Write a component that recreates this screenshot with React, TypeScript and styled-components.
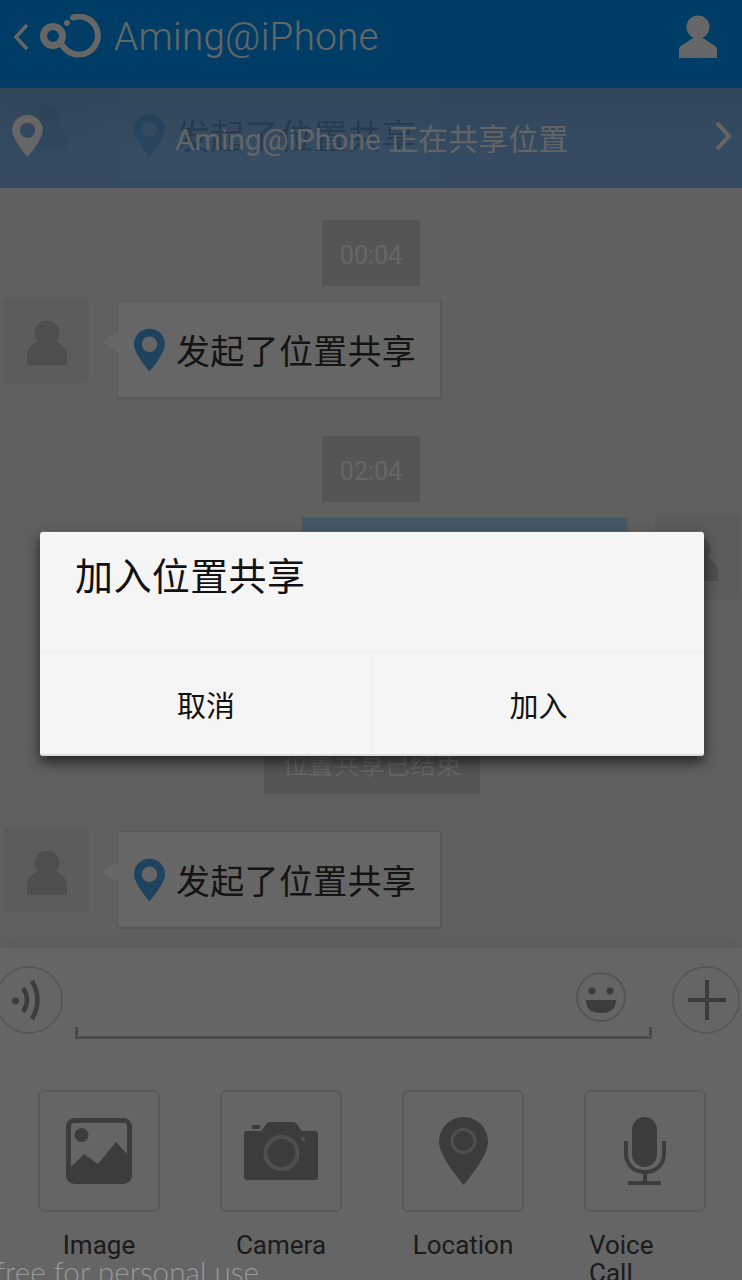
import React from 'react';
import styled, { createGlobalStyle } from 'styled-components';

const Global = createGlobalStyle`
  html, body { margin: 0; padding: 0; background: #606060; }
  * { box-sizing: border-box; }
`;

const FONT = `Roboto, "Noto Sans CJK SC", sans-serif`;

const Screen = styled.div`
  position: relative;
  width: 742px;
  height: 1280px;
  overflow: hidden;
  display: flex;
  flex-direction: column;
  background: #f0f0f0;
  font-family: ${FONT};
`;

const Header = styled.header`
  flex: none;
  height: 88px;
  background: #0099ff;
  color: #fff;
  display: flex;
  align-items: flex-start;
  padding: 14px 25px 0 12px;
`;
const BackIcon = styled.svg`
  width: 18px;
  height: 30px;
  margin-top: 8px;
`;
const Logo = styled.svg`
  width: 64px;
  height: 44px;
  margin-left: 10px;
`;
const HeaderTitle = styled.h1`
  margin: 0 0 0 10px;
  flex: 1;
  font-size: 38.6px;
  font-weight: 300;
  line-height: 46px;
  letter-spacing: 0.3px;
`;
const HeaderUser = styled.svg`
  width: 38px;
  height: 43px;
  margin-top: 1px;
`;

const Chat = styled.main`
  position: relative;
  flex: 1;
  min-height: 0;
  overflow: hidden;
  display: flex;
  flex-direction: column;
  justify-content: flex-end;
  padding-bottom: 19px;
`;
const Banner = styled.div`
  position: absolute;
  top: 0;
  left: 0;
  right: 0;
  height: 100px;
  display: flex;
  align-items: center;
  padding: 0 10px 0 12px;
  color: rgba(255, 255, 255, 0.95);
  background: linear-gradient(rgba(98, 160, 215, 0.82), rgba(109, 175, 244, 0.82) 60%);
`;
const BannerPin = styled.svg`
  width: 31px;
  height: 42px;
  margin-top: -4px;
`;
const BannerText = styled.span`
  margin-left: 132px;
  margin-top: 3px;
  flex: 1;
  font-size: 30px;
  line-height: 40px;
`;
const BannerChevron = styled.svg`
  width: 18px;
  height: 32px;
  margin-top: -4px;
`;

const Row = styled.div<{ $right?: boolean; $top?: number }>`
  flex: none;
  display: flex;
  align-items: flex-start;
  gap: ${p => (p.$right ? 27 : 28)}px;
  height: 101px;
  padding: 0 2px 0 4px;
  margin-top: ${p => p.$top ?? 0}px;
  justify-content: ${p => (p.$right ? 'flex-end' : 'flex-start')};
`;
const Avatar = styled.div`
  flex: none;
  width: 85px;
  height: 85px;
  border-radius: 4px;
  background: #e6e6e6;
  display: flex;
  align-items: center;
  justify-content: center;
  svg { width: 40px; height: 44px; margin-top: 4px; }
`;
const Bubble = styled.div<{ $blue?: boolean }>`
  position: relative;
  flex: none;
  width: ${p => (p.$blue ? 326 : 325)}px;
  height: 98px;
  margin-top: 3px;
  display: flex;
  align-items: center;
  padding-left: 16px;
  gap: 11px;
  font-size: 34px;
  letter-spacing: 0.3px;
  color: #333;
  background: ${p => (p.$blue ? '#a8dcff' : '#ffffff')};
  border: 1px solid #dcdcdc;
  border-bottom-width: 2px;
  border-right-width: 2px;
  &::before {
    content: '';
    display: ${p => (p.$blue ? 'none' : 'block')};
    position: absolute;
    left: -17px;
    top: 30px;
    border-style: solid;
    border-width: 10px 17px 10px 0;
    border-color: transparent #ffffff transparent transparent;
  }
`;
const BubblePin = styled.svg`
  width: 31px;
  height: 44px;
  flex: none;
`;
const Chip = styled.div<{ $top: number; $wide?: boolean }>`
  flex: none;
  align-self: center;
  height: 66px;
  margin-top: ${p => p.$top}px;
  margin-left: ${p => (p.$wide ? 2 : 0)}px;
  padding: 0 ${p => (p.$wide ? 19 : 18)}px;
  background: #d4d4d4;
  color: #fff;
  font-size: ${p => (p.$wide ? 25.5 : 25)}px;
  line-height: ${p => (p.$wide ? 74 : 71)}px;
  white-space: nowrap;
`;

const Composer = styled.footer`
  flex: none;
  height: 332px;
  background: #fdfdfd;
  box-shadow: 0 -6px 8px rgba(0, 0, 0, 0.04);
`;
const InputRow = styled.div`
  display: flex;
  align-items: flex-start;
  gap: 12px;
  padding: 18px 2px 0 0;
  margin-left: -5px;
  height: 91px;
`;
const RoundButton = styled.svg`
  flex: none;
  width: 68px;
  height: 68px;
`;
const InputField = styled.div`
  position: relative;
  flex: 1;
  margin-right: 8px;
  height: 73px;
  border-bottom: 3px solid #b8b8b8;
  display: flex;
  justify-content: flex-end;
  padding: 6px 26px 0 0;
  &::before, &::after {
    content: '';
    position: absolute;
    bottom: 0;
    width: 3px;
    height: 9px;
    background: #b8b8b8;
  }
  &::before { left: 0; }
  &::after { right: 0; }
`;
const Smile = styled.svg`
  width: 50px;
  height: 50px;
`;
const Tools = styled.div`
  display: grid;
  grid-template-columns: repeat(4, 122px);
  column-gap: 60px;
  padding: 51px 0 0 38px;
`;
const Tool = styled.div`
  display: flex;
  flex-direction: column;
  align-items: center;
`;
const ToolTile = styled.div`
  width: 122px;
  height: 122px;
  border: 2px solid #e0e0e0;
  border-radius: 6px;
  display: flex;
  align-items: center;
  justify-content: center;
`;
const ToolIcon = styled.svg`
  display: block;
`;
const ToolLabel = styled.span`
  margin-top: 19px;
  max-width: 112px;
  font-size: 26px;
  line-height: 28px;
  color: #444;
`;

const Dim = styled.div`
  position: absolute;
  inset: 0;
  background: rgba(0, 0, 0, 0.6);
  display: flex;
  align-items: center;
  padding: 8px 38px 0 40px;
`;
const Dialog = styled.section`
  width: 100%;
  height: 224px;
  background: #f5f5f5;
  border-radius: 3px;
  border-bottom: 2px solid #dedede;
  box-shadow: 0 6px 14px rgba(0, 0, 0, 0.65), 0 -1px 1px rgba(255, 255, 255, 0.15);
  display: flex;
  flex-direction: column;
`;
const DialogTitle = styled.h2`
  margin: 0;
  flex: none;
  height: 120px;
  padding: 20px 0 0 35px;
  font-size: 38px;
  letter-spacing: 0.4px;
  font-weight: 400;
  line-height: 50px;
  color: #111;
`;
const DialogActions = styled.div`
  flex: 1;
  display: grid;
  grid-template-columns: 1fr 1fr;
  border-top: 1px solid #eeeeee;
`;
const DialogButton = styled.button`
  border: 0;
  background: none;
  padding: 0;
  font-family: ${FONT};
  font-size: 29px;
  color: #111;
  & + & { border-left: 1px solid #eeeeee; }
`;
const Watermark = styled.div`
  position: absolute;
  left: -5px;
  top: 1252px;
  font-family: Lato, sans-serif;
  font-weight: 300;
  font-size: 29.7px;
  line-height: 40px;
  white-space: nowrap;
  color: rgba(255, 255, 255, 0.35);
`;

const PIN = 'M16 0C7 0 0 7 0 16C0 26 16 44 16 44C16 44 32 26 32 16C32 7 25 0 16 0Z';
const PinShape = ({ fill }: { fill: string }) => (
  <path fill={fill} fillRule="evenodd" d={`${PIN}M16 8A8 8 0 1 0 16 24A8 8 0 1 0 16 8Z`} />
);
const Person = () => (
  <svg viewBox="0 0 40 44">
    <circle cx="20" cy="12" r="12.5" fill="#c4c4c4" />
    <path fill="#c4c4c4" d="M0 44V36Q0 24 12 20H28Q40 24 40 36V44Z" />
  </svg>
);
const Message = ({ top }: { top?: number }) => (
  <Row $top={top}>
    <Avatar><Person /></Avatar>
    <Bubble>
      <BubblePin viewBox="0 0 32 44"><PinShape fill="#4fa5ec" /></BubblePin>
      发起了位置共享
    </Bubble>
  </Row>
);

const ICON = '#979797';

export default function App() {
  return (
    <Screen>
      <Global />
      <Header>
        <BackIcon viewBox="0 0 18 30">
          <path d="M15 3L4 15L15 27" fill="none" stroke="#fff" strokeWidth="3.5" />
        </BackIcon>
        <Logo viewBox="0 0 64 44">
          <circle cx="13" cy="22" r="9.5" fill="none" stroke="#fff" strokeWidth="7" />
          <path d="M33 3.5A19 19 0 1 1 23 32" fill="none" stroke="#fff" strokeWidth="6" strokeLinecap="round" />
          <circle cx="27" cy="9" r="3" fill="#fff" />
        </Logo>
        <HeaderTitle>Aming@iPhone</HeaderTitle>
        <HeaderUser viewBox="0 0 38 43">
          <circle cx="19" cy="12" r="11.5" fill="#fff" />
          <path fill="#fff" d="M0 43V35Q0 31 5 29L14 23H24L33 29Q38 31 38 35V43Z" />
        </HeaderUser>
      </Header>

      <Chat>
        <Message />
        <Chip $top={36}>00:04</Chip>
        <Message top={12} />
        <Chip $top={37}>02:04</Chip>
        <Row $right $top={12}>
          <Bubble $blue />
          <Avatar><Person /></Avatar>
        </Row>
        <Chip $top={113} $wide>位置共享已结束</Chip>
        <Message top={34} />
        <Banner>
          <BannerPin viewBox="0 0 32 44"><PinShape fill="#fff" /></BannerPin>
          <BannerText>Aming@iPhone 正在共享位置</BannerText>
          <BannerChevron viewBox="0 0 18 32">
            <path d="M3 3L15 16L3 29" fill="none" stroke="#fff" strokeWidth="4" />
          </BannerChevron>
        </Banner>
      </Chat>

      <Composer>
        <InputRow>
          <RoundButton viewBox="0 0 68 68">
            <circle cx="34" cy="34" r="33" fill="none" stroke="#d4d4d4" strokeWidth="1.5" />
            <circle cx="20.5" cy="34.7" r="3.5" fill={ICON} />
            <path d="M28 22Q36 34 28 46M37 15Q48 34 37 53" fill="none" stroke={ICON} strokeWidth="4.5" />
          </RoundButton>
          <InputField>
            <Smile viewBox="0 0 50 50">
              <circle cx="25" cy="25" r="24" fill="none" stroke="#d4d4d4" strokeWidth="2" />
              <circle cx="16" cy="19" r="3.5" fill={ICON} />
              <circle cx="34" cy="19" r="3.5" fill={ICON} />
              <path fill={ICON} d="M10 28H40Q40 41 25 41Q10 41 10 28Z" />
            </Smile>
          </InputField>
          <RoundButton viewBox="0 0 68 68">
            <circle cx="34" cy="34" r="33" fill="none" stroke="#d4d4d4" strokeWidth="1.5" />
            <path d="M16 34H54M35 14V54" fill="none" stroke={ICON} strokeWidth="4" />
          </RoundButton>
        </InputRow>
        <Tools>
          <Tool>
            <ToolTile>
              <ToolIcon width="66" height="66" viewBox="0 0 66 66">
                <rect x="2.5" y="2.5" width="61" height="61" rx="6" fill="none" stroke={ICON} strokeWidth="5" />
                <circle cx="15.5" cy="17" r="7" fill={ICON} />
                <path fill={ICON} d="M4 50L18 36L32 46L50 24L63 38V60Q63 64 59 64H7Q3 64 3 60Z" />
              </ToolIcon>
            </ToolTile>
            <ToolLabel>Image</ToolLabel>
          </Tool>
          <Tool>
            <ToolTile>
              <ToolIcon width="74" height="58" viewBox="0 0 74 58">
                <path fill={ICON} d="M3 9H17L23 1Q24 0 26 0H49Q51 0 52 1L58 9H71Q74 9 74 12V55Q74 58 71 58H3Q0 58 0 55V12Q0 9 3 9Z" />
                <rect x="8" y="3" width="8" height="4" fill={ICON} />
                <circle cx="37.5" cy="31" r="16" fill={ICON} stroke="#fff" strokeWidth="4" strokeOpacity="0.45" />
                <circle cx="59" cy="17" r="2" fill="#fff" fillOpacity="0.6" />
              </ToolIcon>
            </ToolTile>
            <ToolLabel>Camera</ToolLabel>
          </Tool>
          <Tool>
            <ToolTile>
              <ToolIcon width="49" height="68" viewBox="0 0 49 68">
                <path fill={ICON} d="M24.5 0C11 0 0 11 0 25C0 40 24.5 68 24.5 68C24.5 68 49 40 49 25C49 11 38 0 24.5 0Z" />
                <circle cx="24.5" cy="24" r="11.5" fill="none" stroke="#fff" strokeOpacity="0.45" strokeWidth="3" />
              </ToolIcon>
            </ToolTile>
            <ToolLabel>Location</ToolLabel>
          </Tool>
          <Tool>
            <ToolTile>
              <ToolIcon width="42" height="68" viewBox="0 0 42 68">
                <rect x="8" y="0" width="25" height="50" rx="12.5" fill={ICON} />
                <path d="M2 24V36C2 48 10 55 21 55C32 55 40 48 40 36V24M21 55V65" fill="none" stroke={ICON} strokeWidth="4" />
                <rect x="4" y="64" width="33" height="4" fill={ICON} />
              </ToolIcon>
            </ToolTile>
            <ToolLabel>Voice Call</ToolLabel>
          </Tool>
        </Tools>
      </Composer>

      <Dim>
        <Dialog>
          <DialogTitle>加入位置共享</DialogTitle>
          <DialogActions>
            <DialogButton>取消</DialogButton>
            <DialogButton>加入</DialogButton>
          </DialogActions>
        </Dialog>
      </Dim>
      <Watermark>free for personal use</Watermark>
    </Screen>
  );
}
